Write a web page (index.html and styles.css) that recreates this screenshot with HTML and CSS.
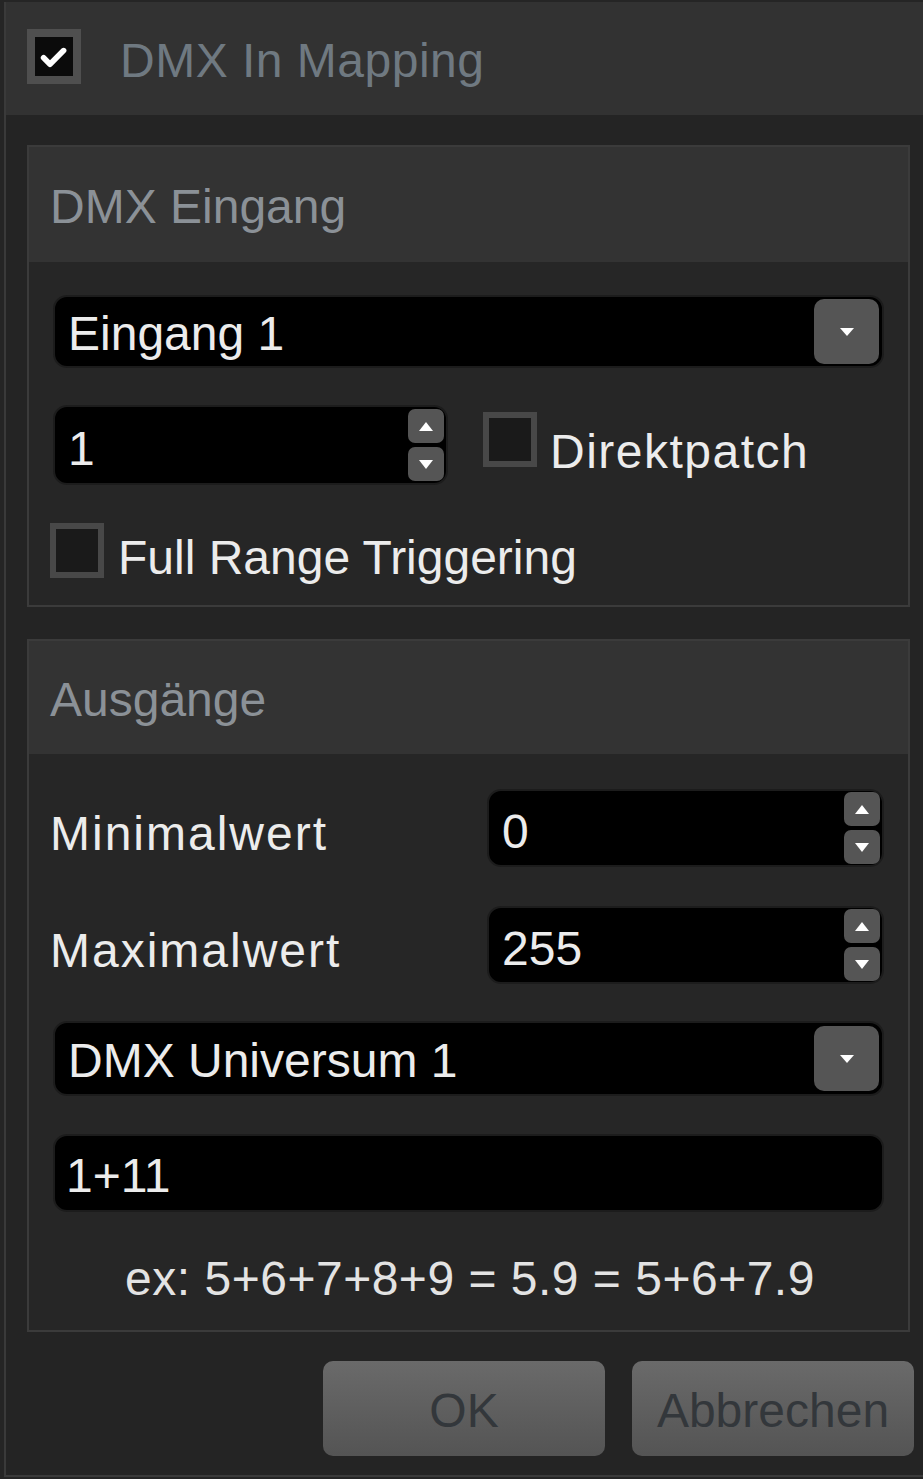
FILE: index.html
```html
<!DOCTYPE html>
<html lang="de">
<head>
<meta charset="utf-8">
<title>DMX In Mapping</title>
<link rel="stylesheet" href="styles.css">
</head>
<body>
<div class="window">
  <header class="title-bar">
    <span class="check check-on">
      <svg viewBox="0 0 40 40" width="40" height="40"><path d="M7 21 L15 29 L32 12" fill="none" stroke="#fff" stroke-width="7" stroke-linecap="round" stroke-linejoin="round"/></svg>
    </span>
    <span class="title">DMX In Mapping</span>
  </header>

  <main class="content">
    <section class="group">
      <div class="group-head">DMX Eingang</div>
      <div class="group-body body-in">
        <div class="combo">
          <span class="val">Eingang 1</span>
          <span class="combo-btn"><svg viewBox="0 0 16 10" width="16" height="10"><path d="M1 1 H15 L8 9 Z" fill="#fff"/></svg></span>
        </div>
        <div class="row row-spin">
          <div class="spin spin-small">
            <span class="val">1</span>
            <span class="spin-btns">
              <span class="sbtn"><svg viewBox="0 0 14 9" width="14" height="9"><path d="M0 9 H14 L7 0 Z" fill="#fff"/></svg></span>
              <span class="sbtn"><svg viewBox="0 0 14 9" width="14" height="9"><path d="M0 0 H14 L7 9 Z" fill="#fff"/></svg></span>
            </span>
          </div>
          <span class="check check-off"></span>
          <span class="label label-wide">Direktpatch</span>
        </div>
        <div class="row row-full">
          <span class="check check-off"></span>
          <span class="label">Full Range Triggering</span>
        </div>
      </div>
    </section>

    <section class="group group-out">
      <div class="group-head">Ausgänge</div>
      <div class="group-body body-out">
        <div class="row row-val">
          <span class="label label-fixed">Minimalwert</span>
          <div class="spin spin-wide">
            <span class="val">0</span>
            <span class="spin-btns">
              <span class="sbtn"><svg viewBox="0 0 14 9" width="14" height="9"><path d="M0 9 H14 L7 0 Z" fill="#fff"/></svg></span>
              <span class="sbtn"><svg viewBox="0 0 14 9" width="14" height="9"><path d="M0 0 H14 L7 9 Z" fill="#fff"/></svg></span>
            </span>
          </div>
        </div>
        <div class="row row-val row-max">
          <span class="label label-fixed">Maximalwert</span>
          <div class="spin spin-wide">
            <span class="val">255</span>
            <span class="spin-btns">
              <span class="sbtn"><svg viewBox="0 0 14 9" width="14" height="9"><path d="M0 9 H14 L7 0 Z" fill="#fff"/></svg></span>
              <span class="sbtn"><svg viewBox="0 0 14 9" width="14" height="9"><path d="M0 0 H14 L7 9 Z" fill="#fff"/></svg></span>
            </span>
          </div>
        </div>
        <div class="combo combo-uni">
          <span class="val">DMX Universum 1</span>
          <span class="combo-btn"><svg viewBox="0 0 16 10" width="16" height="10"><path d="M1 1 H15 L8 9 Z" fill="#fff"/></svg></span>
        </div>
        <div class="textbox"><span class="val">1+11</span></div>
        <p class="hint">ex: 5+6+7+8+9 = 5.9 = 5+6+7.9</p>
      </div>
    </section>

    <div class="buttons">
      <span class="btn btn-ok">OK</span>
      <span class="btn btn-cancel">Abbrechen</span>
    </div>
  </main>
</div>
</body>
</html>
```

FILE: styles.css
```css
html, body {
  margin: 0;
  padding: 0;
  background: #252525;
}

body {
  font-family: "Liberation Sans", Arial, sans-serif;
  font-size: 48px;
  color: #e6e6e6;
  width: 923px;
  height: 1479px;
  overflow: hidden;
}

.window {
  margin-left: 4px;
  border-left: 2px solid #3a3a3a;
  border-bottom: 2px solid #3a3a3a;
  height: 1475px;
  box-sizing: border-box;
  background: #242424;
}

.title-bar {
  display: flex;
  align-items: center;
  height: 113px;
  margin-top: 2px;
  padding-left: 21px;
  background: #323232;
}

.check {
  display: flex;
  align-items: center;
  justify-content: center;
  width: 54px;
  height: 55px;
  box-sizing: border-box;
  flex: none;
}

.check-on {
  border: 8px solid #4f4f4f;
  background: #0b0b0b;
  margin-top: -4px;
}

.check-on svg {
  width: 32px;
  height: 32px;
}

.check-off {
  border: 6px solid #484848;
  background: #1a1a1a;
}

.title {
  margin-left: 39px;
  color: #6f7981;
  line-height: 1;
  margin-top: 4px;
  letter-spacing: 0.5px;
}

.content {
  padding: 30px 10px 0 21px;
}

.group {
  width: 883px;
  border: 2px solid #3b3b3b;
  box-sizing: border-box;
  background: #262626;
}

.group-out {
  margin-top: 32px;
}

.group-head {
  height: 115px;
  display: flex;
  align-items: center;
  padding-left: 21px;
  background: #333333;
  color: #8b9197;
  padding-top: 4px;
  box-sizing: border-box;
}

.group-out .group-head {
  height: 113px;
}

.group-body {
  padding: 33px 24px 27px 21px;
}

.body-out {
  padding: 35px 24px 21px 21px;
}

.combo,
.spin,
.textbox {
  display: flex;
  align-items: center;
  background: #000;
  border: 2px solid #1c1c1c;
  border-radius: 14px;
  box-sizing: border-box;
}

.combo {
  height: 73px;
  margin-left: 3px;
  justify-content: space-between;
  padding: 0 3px 0 13px;
}

.combo-uni {
  height: 75px;
  margin-top: 37px;
}

.val {
  line-height: 1;
  padding-top: 4px;
  color: #ececec;
}

.spin .val {
  padding-top: 8px;
}

.combo-btn {
  width: 65px;
  height: 65px;
  border-radius: 10px;
  background: #555555;
  display: flex;
  align-items: center;
  justify-content: center;
}

.row {
  display: flex;
  align-items: center;
}

.row-spin {
  margin-top: 37px;
  margin-left: 3px;
  height: 80px;
}

.spin {
  height: 80px;
  justify-content: space-between;
  padding: 0 2px 0 13px;
}

.spin-small {
  width: 395px;
  margin-right: 35px;
}

.spin-small + .check-off {
  margin-top: -12px;
}

.spin-btns {
  display: flex;
  flex-direction: column;
  gap: 4px;
}

.sbtn {
  width: 36px;
  height: 34px;
  border-radius: 7px;
  background: #555555;
  display: flex;
  align-items: center;
  justify-content: center;
}

.label {
  margin-left: 13px;
  line-height: 1;
  color: #ececec;
  padding-top: 14px;
}

.label-wide {
  letter-spacing: 1.5px;
}

.row-full {
  margin-top: 38px;
  height: 55px;
}

.row-full .label {
  margin-left: 14px;
  height: 55px;
  box-sizing: border-box;
  padding-top: 11px;
}

.row-val {
  height: 78px;
}

.row-val .spin {
  height: 78px;
}

.row-max {
  margin-top: 39px;
}

.label-fixed {
  margin-left: 0;
  width: 437px;
  flex: none;
  letter-spacing: 2px;
  padding-top: 12px;
}

.spin-wide {
  width: 397px;
}

.textbox {
  height: 78px;
  margin-top: 38px;
  margin-left: 3px;
  padding-left: 11px;
}

.textbox .val {
  padding-top: 6px;
}

.hint {
  margin: 37px 0 0 0;
  height: 60px;
  line-height: 60px;
  text-align: center;
  color: #e3e3e3;
  padding-left: 6px;
  letter-spacing: 0.5px;
}

.buttons {
  display: flex;
  justify-content: flex-end;
  gap: 27px;
  margin-top: 29px;
  margin-right: -1px;
}

.btn {
  display: flex;
  align-items: center;
  justify-content: center;
  width: 282px;
  height: 95px;
  border-radius: 10px;
  background: linear-gradient(#6a6a6a, #545454);
  color: #33373b;
  line-height: 1;
  padding-top: 4px;
  box-sizing: border-box;
}
```
